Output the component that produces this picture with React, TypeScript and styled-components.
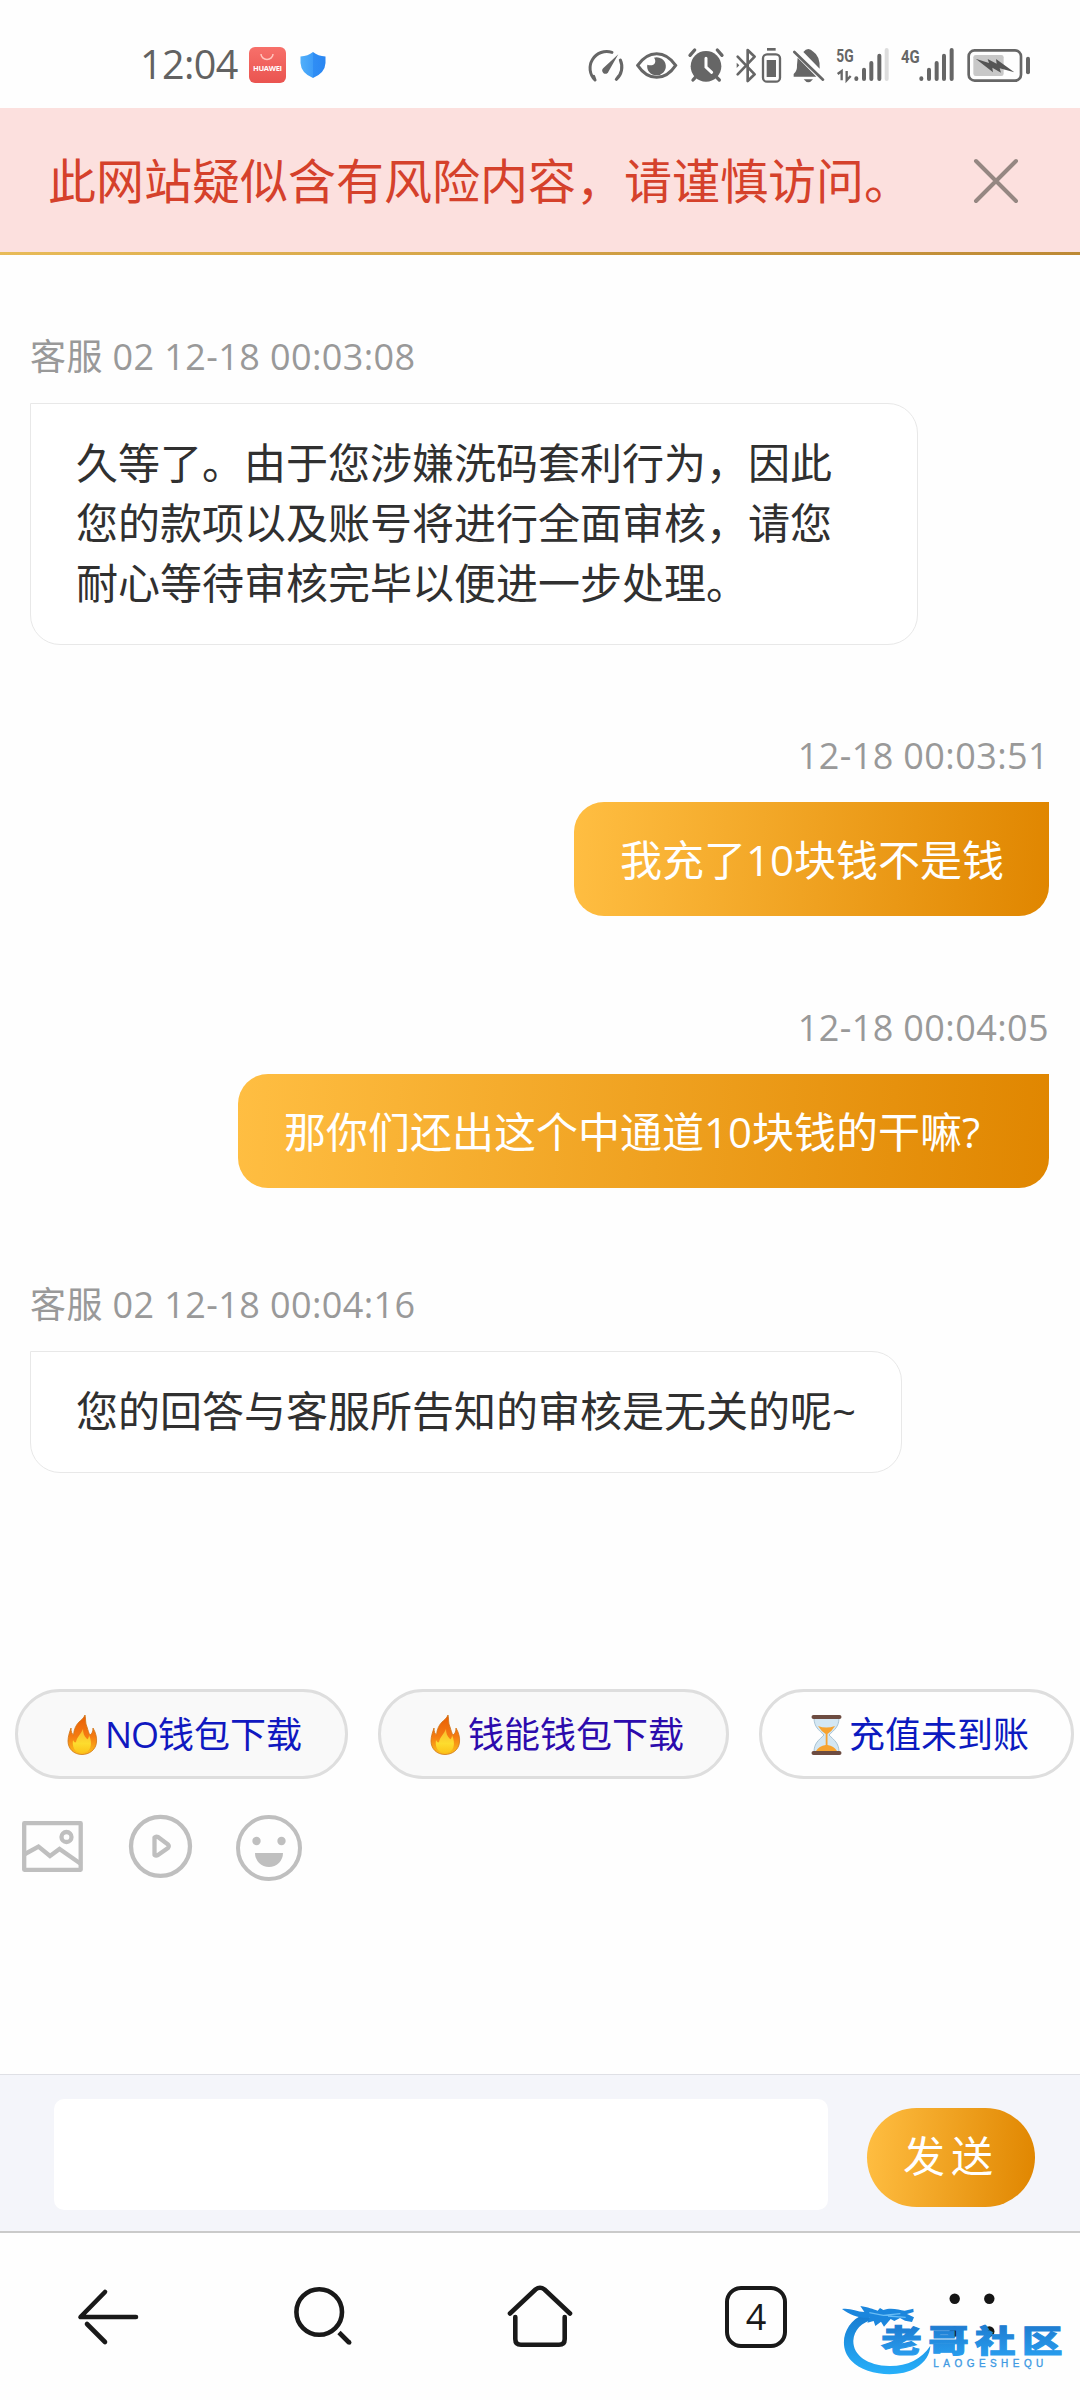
import React from "react";
import styled, { createGlobalStyle } from "styled-components";

const Global = createGlobalStyle`
  * { box-sizing: border-box; }
  body { margin: 0; background: #fefefe; }
`;

const Page = styled.div`
  display: flex;
  flex-direction: column;
  width: 1080px;
  height: 2400px;
  overflow: hidden;
  background: #fefefe;
  color: #303030;
  font-family: "Open Sans", "Noto Sans CJK SC", sans-serif;
`;

const StatusBar = styled.header`
  display: flex;
  align-items: center;
  height: 108px;
  padding: 30px 45px 8px 140px;
`;

const Clock = styled.span`
  width: 109px;
  font-size: 39.5px;
  font-weight: 500;
  line-height: 66px;
  padding-bottom: 2px;
  letter-spacing: -0.6px;
  color: #626262;
`;

const StatusIcons = styled.div`
  display: flex;
  margin-left: auto;
`;

const Banner = styled.div`
  display: flex;
  align-items: center;
  justify-content: space-between;
  height: 147px;
  padding: 1px 60px 3px 48px;
  background: linear-gradient(90deg, #e8bb58, #bd8934) left bottom / 100% 3px no-repeat, #fce0de;
`;

const BannerText = styled.p`
  margin: 0;
  font-size: 48px;
  line-height: 70px;
  color: #d5412b;
`;

const Chat = styled.main`
  display: flex;
  flex: 1;
  flex-direction: column;
  padding: 81px 31px 0 30px;
`;

const Message = styled.article<{ $mine?: boolean; $gap: number }>`
  display: flex;
  flex-direction: column;
  align-items: ${(p) => (p.$mine ? "flex-end" : "flex-start")};
  margin-top: ${(p) => p.$gap}px;
`;

const Meta = styled.span`
  margin-bottom: 25px;
  font-size: 36px;
  line-height: 42px;
  letter-spacing: 0.4px;
  color: #999;
  white-space: pre;
`;

const AgentBubble = styled.div<{ $width: number }>`
  width: ${(p) => p.$width}px;
  padding: 29px 40px 31px 45px;
  border: 1.5px solid #e8e8e8;
  border-radius: 0 30px 30px 30px;
  background: #fff;
  font-size: 42px;
  line-height: 60px;
  white-space: pre;
`;

const UserBubble = styled.div<{ $width: number }>`
  width: ${(p) => p.$width}px;
  height: 114px;
  padding: 28px 0 26px 46px;
  border-radius: 30px 0 30px 30px;
  background: linear-gradient(94deg, #ffbe42, #e08600);
  color: #fff;
  font-size: 42px;
  line-height: 60px;
  white-space: pre;
`;

const Chips = styled.div`
  display: flex;
  gap: 30px;
  height: 90px;
  padding-left: 15px;
`;

const Chip = styled.a<{ $color: string; $plain?: boolean; $width: number }>`
  display: flex;
  flex: none;
  align-items: center;
  width: ${(p) => p.$width}px;
  padding: 2px 0 0 42px;
  border: 3px solid #dedede;
  border-radius: 45px;
  background: ${(p) => (p.$plain ? "#fefefe" : "#f9f9f9")};
  color: ${(p) => p.$color};
  font-size: 36px;
  line-height: 50px;
  white-space: nowrap;
`;

const Latin = styled.span`
  letter-spacing: -1px;
`;

const Tools = styled.div`
  display: flex;
  align-items: flex-start;
  height: 295px;
  padding: 34px 0 0 20px;
  gap: 40px;
`;

const Composer = styled.div`
  display: flex;
  align-items: flex-start;
  height: 159px;
  padding: 24px 45px 0 54px;
  border-top: 1px solid #dfe0e5;
  border-bottom: 2px solid #cacaca;
  background: #f4f5fa;
`;

const Field = styled.input`
  width: 774px;
  height: 111px;
  border: 0;
  border-radius: 10px;
  background: #fff;
`;

const Send = styled.button`
  width: 168px;
  height: 99px;
  margin: 9px 0 0 39px;
  padding: 0 0 3px;
  border: 0;
  border-radius: 50px;
  background: linear-gradient(94deg, #ffbe42, #e08600);
  color: #fff;
  font-family: inherit;
  font-size: 42px;
  line-height: 60px;
  letter-spacing: 6px;
`;

const Nav = styled.nav`
  display: grid;
  grid-template-columns: repeat(5, 216px);
  justify-items: center;
  position: relative;
  height: 167px;
  padding-top: 49px;
`;

const TabCount = styled.span`
  display: flex;
  align-items: center;
  justify-content: center;
  width: 62px;
  height: 62px;
  margin-top: 4px;
  border: 4.5px solid #191919;
  border-radius: 16px;
  color: #191919;
  font-size: 36px;
  font-weight: 500;
  line-height: 50px;
`;

const Watermark = styled.svg`
  position: absolute;
  left: 838px;
  top: 64px;
`;

/* Status glyphs share a 210-unit tall grid, three units to a pixel. */
function Glyph({ x, w, children }: { x: number; w: number; children: React.ReactNode }) {
  return (
    <svg width={w / 3} height={70} viewBox={`${x} 0 ${w} 210`} fill="none" stroke="#666" strokeWidth={9} strokeLinecap="round">
      {children}
    </svg>
  );
}

const fill = { fill: "#666", stroke: "none" };

const ShieldIcon = styled.svg`
  margin-left: 14px;
`;

function Store() {
  return (
    <svg width="37" height="36" viewBox="0 0 37 36">
      <defs>
        <linearGradient id="store" x2="0" y2="1"><stop stopColor="#f7706a" /><stop offset="1" stopColor="#ea5450" /></linearGradient>
      </defs>
      <rect width="37" height="36" rx="6" fill="url(#store)" />
      <path d="M12 7a6 5.5 0 0 0 12 0" fill="none" stroke="#ffc5bd" strokeWidth="1.5" />
      <text x="4" y="24" textLength="29" fontSize="7.5" fontWeight="700" fill="#fff" fontFamily="Open Sans, sans-serif">HUAWEI</text>
    </svg>
  );
}

function Shield() {
  return (
    <ShieldIcon width="26" height="26" viewBox="0 0 26 26">
      <defs>
        <linearGradient id="shield"><stop stopColor="#52b0fa" /><stop offset=".5" stopColor="#3d9cf8" /><stop offset=".5" stopColor="#2f8ef5" /><stop offset="1" stopColor="#2a86f2" /></linearGradient>
      </defs>
      <path d="M13 0Q18 4 25.5 4.500V11Q25 21 13 26Q1 21 .5 11V4.500Q8 4 13 0Z" fill="url(#shield)" />
    </ShieldIcon>
  );
}

function Fire() {
  return (
    <svg width="45" height="40" viewBox="0 0 45 40">
      <defs>
        <linearGradient id="fire" x2="0" y2="1"><stop stopColor="#e85d04" /><stop offset=".55" stopColor="#f57c12" /><stop offset="1" stopColor="#fcc21b" /></linearGradient>
        <linearGradient id="flame" x2="0" y2="1"><stop stopColor="#f9b92e" /><stop offset=".6" stopColor="#fddc2e" /><stop offset="1" stopColor="#fcc419" /></linearGradient>
      </defs>
      <path d="M25 0C26 4 25 8 27 12C28 15 29 19 30 20C32 19 33 16 33 13C36 18 37 23 36.500 27C36 35 29 39.500 22 39.500C14 39.500 8 34 8 26C8 21 10 16 11 13C11 17 12 19 13.500 20C14 14 16 10 19 7C21 5 24 3 25 0Z" fill="url(#fire)" stroke="#cf7415" strokeWidth=".8" />
      <path d="M23 14C23 18 24 21 27 24C28 25 29 22 29 20C33 29 31 38 22 38C14 38 12 31 13 25C14 27 15 28 16 27C17 22 21 19 23 14Z" fill="url(#flame)" />
    </svg>
  );
}

function Hourglass() {
  return (
    <svg width="45" height="40" viewBox="0 0 45 40">
      <path d="M10 3C10 12 15 15 20 20C15 25 10 28 10 37H35C35 28 30 25 25 20C30 15 35 12 35 3Z" fill="#d4e7f3" stroke="#a9c3d3" />
      <path d="M14 11Q22 14 31 11Q28 16 23.500 19V30Q30 31 33 36H12Q15 31 21.700 30V19Q17 16 14 11Z" fill="#f7a32f" />
      <path d="M9.500 2H35.500M9.500 38H35.500" stroke="#6d4c41" strokeWidth="4" strokeLinecap="round" />
    </svg>
  );
}

const agent1 = ["久等了。由于您涉嫌洗码套利行为，因此", "您的款项以及账号将进行全面审核，请您", "耐心等待审核完毕以便进一步处理。"];

export default function App() {
  return (
    <Page lang="zh-CN">
      <Global />
      <StatusBar>
        <Clock>12:04</Clock>
        <Store />
        <Shield />
        <StatusIcons>
          <Glyph x={45} w={135}>
            <path d="M75 150A50 50 0 0 1 126 67M151 90A50 50 0 0 1 139 148M75 150L71 139M139 148L146 138" />
            <path d="M145 73L101 113A10 10 0 1 0 116 124Z" {...fill} />
          </Glyph>
          <Glyph x={180} w={160}>
            <path d="M203 106Q227 71 260 71T317 106Q293 142 260 142T203 106Z" />
            <path d="M252 83C262 96 252 111 232 104A28 27 0 1 0 252 83Z" {...fill} />
          </Glyph>
          <Glyph x={340} w={140}>
            <circle cx="409" cy="109" r="46" {...fill} />
            <path d="M361 76L375 60M443 60L457 76M379 140L370 150M439 140L449 150" strokeWidth="10" />
            <path d="M409 85V111L426 127" stroke="#fff" />
          </Glyph>
          <Glyph x={480} w={87}>
            <path d="M503 80L554 133L533 153V60L554 80L503 133" strokeWidth="8" strokeLinejoin="round" />
            <path d="M500 98V114L508 106Z" {...fill} />
          </Glyph>
          <Glyph x={567} w={78}>
            <rect x="579" y="73" width="51" height="82" rx="12" strokeWidth="7" />
            <rect x="590" y="90" width="28" height="51" {...fill} />
            <path d="M591 58H617" strokeWidth="8" strokeLinecap="butt" />
          </Glyph>
          <Glyph x={645} w={135}>
            <path d="M700 66Q714 48 730 65Q751 78 749 116Z" {...fill} />
            <path d="M683 83L739 140H671V132Q682 124 681 105Z" {...fill} />
            <path d="M701 148H729Q715 166 701 148Z" {...fill} />
            <path d="M673 66L759 149" strokeWidth="8" />
          </Glyph>
          <Glyph x={780} w={195}>
            <text x="799" y="96" textLength="52" lengthAdjust="spacingAndGlyphs" fontSize="56" fontWeight="700" fontFamily="Roboto, sans-serif" {...fill}>5G</text>
            <path d="M803 132L815 123V151M830 123V151L842 138" strokeWidth="7" strokeLinecap="butt" />
            <path d="M859 145V147M882 119V147M904 99V147M928 77V147" strokeWidth="12" />
            <path d="M950 60V147" stroke="#ddd" strokeWidth="12" />
          </Glyph>
          <Glyph x={975} w={200}>
            <text x="993" y="98" textLength="56" lengthAdjust="spacingAndGlyphs" fontSize="56" fontWeight="700" fontFamily="Roboto, sans-serif" {...fill}>4G</text>
            <path d="M1054 145V147M1077 119V147M1100 99V147M1122 77V147M1145 60V147" strokeWidth="12" />
          </Glyph>
          <Glyph x={1175} w={220}>
            <rect x="1195" y="61" width="157" height="91" rx="18" strokeWidth="8" />
            <rect x="1209" y="75" width="91" height="63" rx="7" fill="#c8c8c8" stroke="none" />
            <path d="M1216 86L1256 99L1252 87L1279 101L1277 87L1332 127L1288 115L1292 128L1266 113L1268 127Z" {...fill} fill="#555" />
            <path d="M1373 86V127" strokeWidth="12" />
          </Glyph>
        </StatusIcons>
      </StatusBar>

      <Banner>
        <BannerText>此网站疑似含有风险内容，请谨慎访问。</BannerText>
        <svg width="48" height="48" viewBox="0 0 48 48" stroke="#958782" strokeWidth="4" strokeLinecap="round">
          <path d="M4 4L44 44M44 4L4 44" />
        </svg>
      </Banner>

      <Chat>
        <Message $gap={0}>
          <Meta>客服 02 12-18 00:03:08</Meta>
          <AgentBubble $width={888}>{agent1.join("\n")}</AgentBubble>
        </Message>
        <Message $mine $gap={90}>
          <Meta>12-18 00:03:51</Meta>
          <UserBubble $width={475}>我充了10块钱不是钱</UserBubble>
        </Message>
        <Message $mine $gap={91}>
          <Meta>12-18 00:04:05</Meta>
          <UserBubble $width={811}>那你们还出这个中通道10块钱的干嘛?</UserBubble>
        </Message>
        <Message $gap={96}>
          <Meta>客服 02 12-18 00:04:16</Meta>
          <AgentBubble $width={872}>您的回答与客服所告知的审核是无关的呢~</AgentBubble>
        </Message>
      </Chat>

      <Chips>
        <Chip $color="#1018c0" $width={333}><Fire /><Latin>NO</Latin>钱包下载</Chip>
        <Chip $color="#2c0bad" $width={351}><Fire />钱能钱包下载</Chip>
        <Chip $color="#0b1ac0" $width={315} $plain><Hourglass />充值未到账</Chip>
      </Chips>

      <Tools>
        <svg width="66" height="70" viewBox="20 1813 66 70" fill="none" stroke="#bfbfbf" strokeWidth="4.300" strokeLinejoin="round">
          <rect x="24.200" y="1823.200" width="56.500" height="46.600" />
          <circle cx="66.500" cy="1837" r="5" />
          <path d="M25 1854L38.500 1846.500L50 1856L59.500 1849L81 1864" strokeLinejoin="miter" />
        </svg>
        <svg width="70" height="70" viewBox="126 1813 70 70" fill="none" stroke="#bfbfbf" strokeWidth="4.300" strokeLinejoin="round">
          <circle cx="160.500" cy="1846.300" r="29.500" />
          <path d="M154.500 1837.500V1855Q156 1856 158 1855L168 1848Q169.500 1846 168 1844.500L158 1837Q156 1836 154.500 1837.500Z" />
        </svg>
        <svg width="70" height="70" viewBox="236 1813 70 70" fill="#bfbfbf">
          <circle cx="269" cy="1848" r="31" fill="none" stroke="#bfbfbf" strokeWidth="4" />
          <circle cx="256.500" cy="1841" r="4.200" /><circle cx="281.500" cy="1841" r="4.200" />
          <path d="M255 1853H283A14 14 0 0 1 255 1853Z" />
        </svg>
      </Tools>

      <Composer>
        <Field aria-label="message" />
        <Send>发送</Send>
      </Composer>

      <Nav>
        <svg width="70" height="70" viewBox="73 2282 70 70" fill="none" stroke="#191919" strokeWidth="4.600" strokeLinecap="round" strokeLinejoin="round">
          <path d="M105 2292L80.500 2317H136" />
          <path d="M87 2324L105 2342" />
        </svg>
        <svg width="70" height="70" viewBox="289 2282 70 70" fill="none" stroke="#191919" strokeWidth="4.600">
          <circle cx="319.200" cy="2312" r="22.800" />
          <path d="M339 2332.500L349 2342.500" /><circle cx="349.200" cy="2342.500" r="2.300" fill="#191919" stroke="none" />
        </svg>
        <svg width="70" height="70" viewBox="505 2282 70 70" fill="none" stroke="#191919" strokeWidth="4.600" strokeLinecap="round" strokeLinejoin="round">
          <path d="M510 2313.500L535.500 2289.500Q540 2286 544.500 2289.500L570 2313.500" />
          <path d="M515.300 2317V2339Q515.300 2344.800 521 2344.800H559Q564.700 2344.800 564.700 2339V2317" />
        </svg>
        <TabCount>4</TabCount>
        <svg width="70" height="70" viewBox="937 2282 70 70" fill="#151515">
          <circle cx="954.700" cy="2298.700" r="5.200" /><circle cx="989.300" cy="2298.700" r="5.200" />
          <circle cx="954.700" cy="2331.500" r="5.200" /><circle cx="989.300" cy="2331.500" r="5.200" />
        </svg>
        <Watermark width="232" height="80" viewBox="474 230 696 240">
          <defs>
            <linearGradient id="ring" x2="0" y2="1"><stop stopColor="#177bd0" /><stop offset="1" stopColor="#27b0fa" /></linearGradient>
            <linearGradient id="word" x2="0" y2="1"><stop stopColor="#1b72c8" /><stop offset="1" stopColor="#2aa2f2" /></linearGradient>
          </defs>
          <path d="M552 282C492 305 472 378 514 421C552 464 654 475 707 443C736 425 750 402 751 376C725 417 679 438 628 437C561 435 519 404 520 361C522 328 545 305 580 298Z" fill="url(#ring)" />
          <path d="M486 266C509 262 530 274 553 275L541 257C564 260 579 267 593 271L600 263L610 269C634 260 657 269 674 271L700 265L701 275L681 281L702 291L696 305L675 301L660 293L643 302L632 296L612 319L603 304L586 317L581 302L562 307L569 292C538 295 512 284 486 266Z" fill="#1b86dd" />
          <path d="M568 277L610 285L661 280M624 287L677 291" stroke="#69bdf5" strokeWidth="4" fill="none" />
          <text transform="translate(604 396) scale(1.32 1)" fontSize="92" letterSpacing="14.500" fontWeight="900" fill="url(#word)" stroke="url(#word)" strokeWidth="3" fontFamily="Noto Sans CJK SC, sans-serif">老哥社区</text>
          <text x="760" y="440" textLength="330" fontSize="30" fill="#3e9ae3" stroke="#3e9ae3" strokeWidth="1" fontFamily="Liberation Sans, sans-serif">LAOGESHEQU</text>
        </Watermark>
      </Nav>
    </Page>
  );
}
